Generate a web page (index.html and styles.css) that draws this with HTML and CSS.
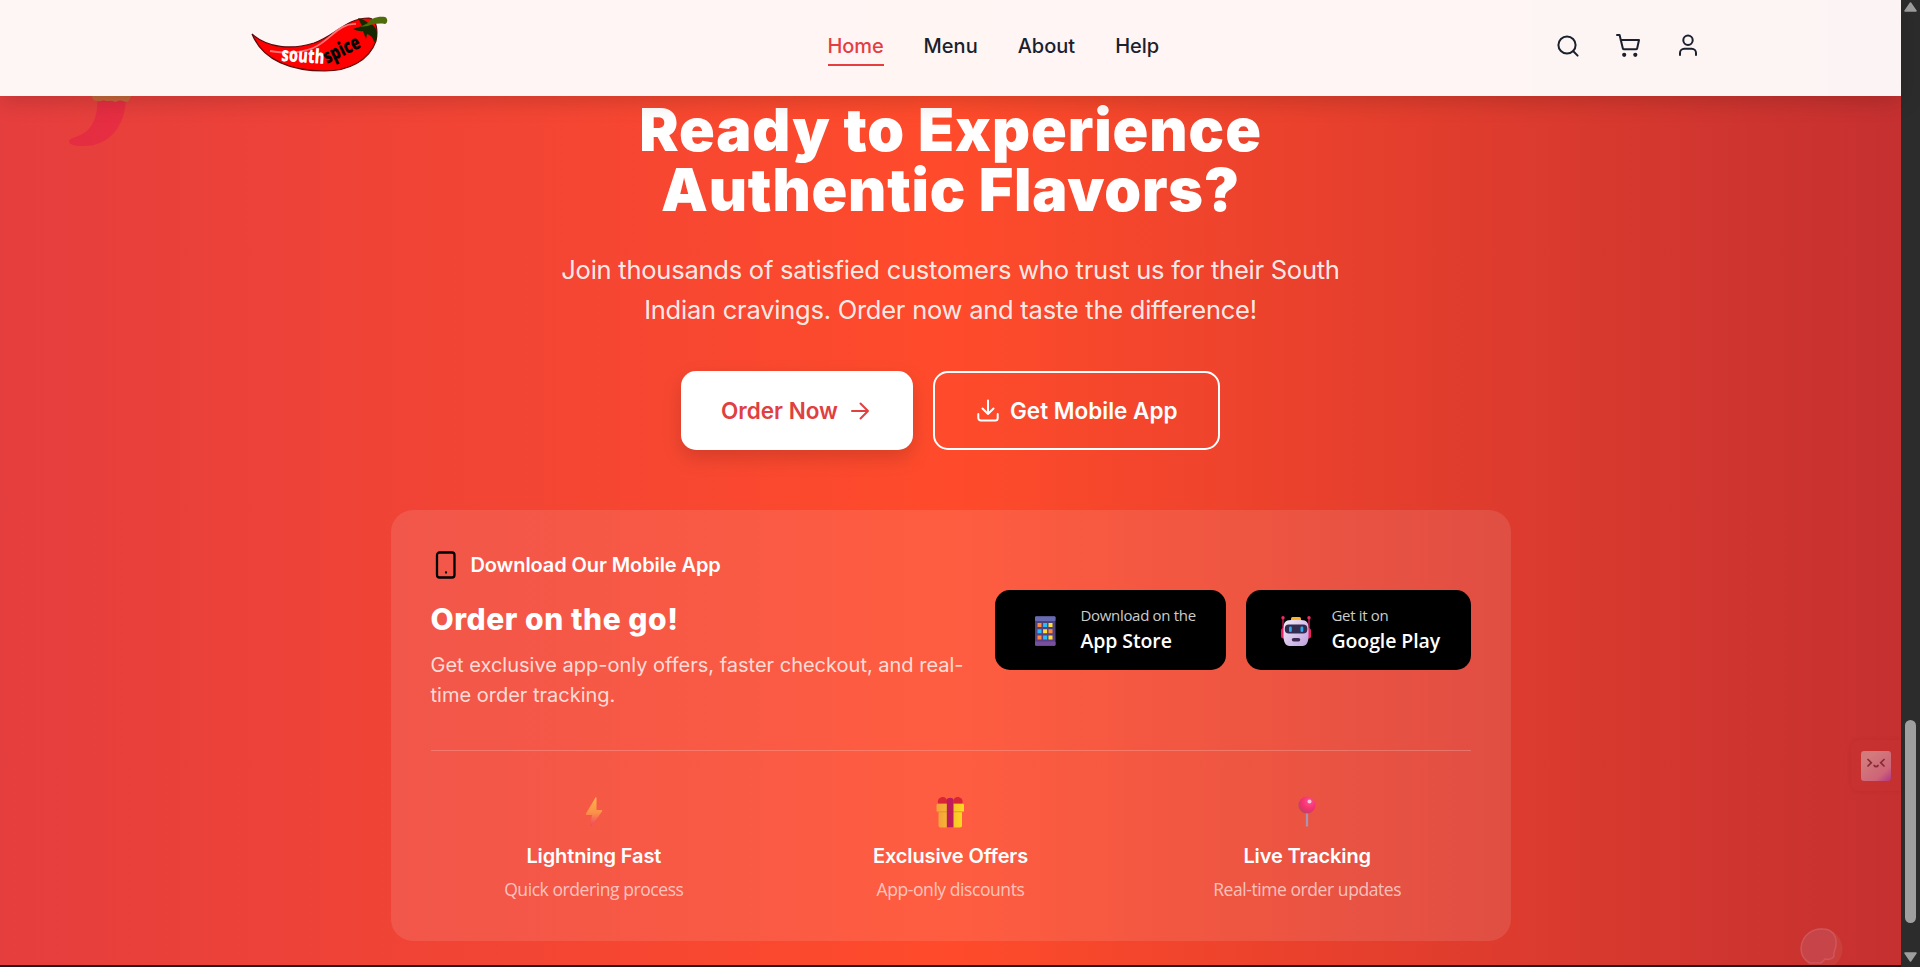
FILE: index.html
```html
<!DOCTYPE html>
<html lang="en">
<head>
<meta charset="utf-8">
<title>South Spice</title>
<link rel="stylesheet" href="styles.css">
</head>
<body>
<div class="page">
  <header class="header">
    <div class="header-inner">
      <a class="logo" aria-label="southspice">
        <svg width="140" height="62" viewBox="0 0 140 62">
          <path d="M1 20 C17 34 40 36 63 29 C84 22 95 4 118 4 C126 5 127 17 125 27 C118 47 97 57 74 57 C41 57 12 47 1 20Z" fill="#fe0000" stroke="#5c0a0a" stroke-width="1.2"/>
          <path d="M19 37 C33 39 47 40 62 34 C79 27 87 9 105 10" fill="none" stroke="#ff7474" stroke-width="1.8"/>
          <path d="M107 4 C112 5 115 7 117 9 C122 9 126 15 126 20 C126 24 125 27 123 28 C122 23 119 21 116 20 L115 25 L112 17 C110 18 104 16 102 15 L111 12Z" fill="#142900"/>
          <path d="M117 9 C119 5 126 2 134 3 C137 4 137 9 134 10 C128 9 121 10 117 12 L109 13Z" fill="#4e6c0b"/>
          <g class="logo-text">
            <text x="30" y="47" textLength="43" lengthAdjust="spacingAndGlyphs" transform="rotate(4 30 47)" fill="#fff">south</text>
            <text x="76" y="50" textLength="39" lengthAdjust="spacingAndGlyphs" transform="rotate(-26 76 50)" fill="#000">spice</text>
          </g>
        </svg>
      </a>
      <nav class="nav">
        <a class="nav-link active">Home</a>
        <a class="nav-link">Menu</a>
        <a class="nav-link">About</a>
        <a class="nav-link">Help</a>
      </nav>
      <div class="tools">
        <svg class="tool" viewBox="0 0 24 24"><circle cx="11" cy="11" r="8.6"/><path d="m17.3 17.3 4.3 4.3"/></svg>
        <svg class="tool" viewBox="0 0 24 24"><path d="M1 1h2.6l3.2 13.2a1.4 1.4 0 0 0 1.4 1.1h11.600a1.4 1.4 0 0 0 1.4-1.1L23 6H4.6"/><circle class="dot" cx="8.2" cy="20.8" r="2.1"/><circle class="dot" cx="19.3" cy="20.8" r="2.1"/></svg>
        <svg class="tool" viewBox="0 0 24 24"><path d="M20 21v-2a4.3 4.3 0 0 0-4.3-4.3H8.300A4.300 4.300 0 0 0 4 19v2"/><circle cx="12" cy="6.300" r="4.700"/></svg>
      </div>
    </div>
  </header>

  <main class="cta">
    <svg class="float-chili" width="66" height="54" viewBox="0 0 66 54">
      <path d="M28 0 H57 C57 32 38 51 14 50 C4 50 0 48 0 45 C0 43 4 42 9 40 C24 35 30 18 28 0Z" fill="#e4104e"/>
      <path d="M23 0 H62 C61 5 58 7 54 5 C50 4 49 5 46 6 C43 4 40 5 37 5 C34 3 32 6 29 5 C25 5 23 3 23 0Z" fill="#8fae38"/>
    </svg>
    <h1 class="title"><span class="t1">Ready to Experience</span><br><span class="t2">Authentic Flavors?</span></h1>
    <p class="lead">Join thousands of satisfied customers who trust us for their South<br>Indian cravings. Order now and taste the difference!</p>
    <div class="actions">
      <a class="btn btn-solid"><span>Order Now</span>
        <svg width="24" height="24" viewBox="0 0 24 24"><path d="M4 12h16M12.500 4.500 20 12l-7.500 7.500"/></svg></a>
      <a class="btn btn-line">
        <svg width="24" height="24" viewBox="0 0 24 24"><path d="M2.300 15v4a2.500 2.500 0 0 0 2.500 2.500h14.400a2.500 2.500 0 0 0 2.500-2.500v-4M12 1.500V15M6.500 9.500 12 15l5.500-5.500"/></svg>
        <span>Get Mobile App</span></a>
    </div>

    <section class="card">
      <div class="app-row">
        <div class="app-copy">
          <div class="label">
            <svg width="30" height="30" viewBox="0 0 30 30"><rect x="6" y="2.500" width="17.500" height="25" rx="2.500"/><path d="M15 22.500v.01"/></svg>
            <span>Download Our Mobile App</span>
          </div>
          <h2 class="subtitle">Order on the go!</h2>
          <p class="copy">Get exclusive app-only offers, faster checkout, and real-<br>time order tracking.</p>
        </div>
        <div class="stores">
          <a class="store store-apple">
            <svg width="30" height="30" viewBox="0 0 30 30">
              <defs><linearGradient id="ph" x2="0" y2="1"><stop stop-color="#45446f"/><stop offset="1" stop-color="#60408a"/></linearGradient></defs>
              <rect x="5" y="0" width="20.500" height="30" rx="1.500" fill="url(#ph)"/>
              <rect x="5" y="0.500" width="20.500" height="4.500" rx="1" fill="#686bb4"/>
              <rect x="5" y="25.500" width="20.500" height="4" rx="1" fill="#76509f"/>
              <g fill="#ff8a3c"><path d="M7.500 7h4v4h-4zM7.500 19.500h4v4h-4zM18.500 13.300h4v4h-4z"/></g>
              <g fill="#28bdf8"><path d="M13.100 7h4v4h-4zM7.500 13.300h4v4h-4zM13.100 19.500h4v4h-4z"/></g>
              <g fill="#ffdf3d"><path d="M18.500 7h4v4h-4zM13.100 13.300h4v4h-4zM18.500 19.500h4v4h-4z"/></g>
            </svg>
            <span class="store-text"><small>Download on the</small><b>App Store</b></span>
          </a>
          <a class="store store-google">
            <svg width="30" height="30" viewBox="0 0 30 30">
              <defs><linearGradient id="rb" x2="1" y2="1"><stop stop-color="#f4eaf6"/><stop offset="1" stop-color="#bda0df"/></linearGradient></defs>
              <path d="M2 2v13M28 2v13" stroke="#d81c5c" stroke-width="1.300"/>
              <circle cx="2" cy="1.800" r="1.700" fill="#f02b62"/><circle cx="28" cy="1.800" r="1.700" fill="#f02b62"/>
              <rect x="0" y="12" width="30" height="10.500" rx="2.500" fill="#ec215f"/>
              <rect x="10" y="1" width="10" height="5" rx="1.500" fill="#fcb624"/>
              <path d="M10 4h10c6 0 7.500 3 7.500 9v7c0 6-2 10-6 10h-13c-4 0-6-4-6-10v-7c0-6 1.500-9 7.500-9z" fill="url(#rb)"/>
              <rect x="3.800" y="8.500" width="22.500" height="9" rx="4" fill="#332b50"/>
              <rect x="8" y="10.500" width="2.800" height="5.500" rx="1.200" fill="#29a9f3"/><rect x="19.500" y="10.500" width="2.800" height="5.500" rx="1.200" fill="#29a9f3"/>
              <rect x="10.800" y="22" width="8.500" height="3.600" rx="1.800" fill="#3a2a52"/>
            </svg>
            <span class="store-text"><small>Get it on</small><b>Google Play</b></span>
          </a>
        </div>
      </div>
      <div class="features">
        <div class="feature">
          <svg width="32" height="32" viewBox="0 0 32 32">
            <defs><linearGradient id="bo" x2="0" y2="1"><stop stop-color="#fdb54c"/><stop offset=".55" stop-color="#fb8f49"/><stop offset="1" stop-color="#ef4168"/></linearGradient></defs>
            <path d="M17.500 1.500 8 17.500c-.4.800 0 1.500.8 1.500H14l-1.500 11c.3.400.8.300 1.200-.200L24 15.500c.5-.8.200-1.500-.6-1.500H18.500V2c0-.8-.6-1-1-.5z" fill="url(#bo)"/></svg>
          <h3>Lightning Fast</h3><p>Quick ordering process</p>
        </div>
        <div class="feature">
          <svg width="32" height="32" viewBox="0 0 32 32">
            <defs><linearGradient id="gi" x2="1" y2="0"><stop stop-color="#f3a13c"/><stop offset="1" stop-color="#fcd820"/></linearGradient></defs>
            <rect x="4.500" y="12" width="23.500" height="19.500" rx="2" fill="url(#gi)"/>
            <rect x="2.500" y="7.500" width="27.500" height="8.500" rx="1.500" fill="url(#gi)"/>
            <path d="M3 15.800h26.500" stroke="#e28a2e" stroke-width=".8"/>
            <path d="M4 7.600C3 3 6 1 9 1c2 0 3.500 1.500 4 3v3.600zM28.500 7.600C29.500 3 26.500 1 23.500 1c-2 0-3.500 1.500-4 3v3.600z" fill="#d92636"/>
            <path d="M12.800 4c0-3 6.700-3 6.700 0v27.500h-6.700z" fill="#bd1d5b"/></svg>
          <h3>Exclusive Offers</h3><p>App-only discounts</p>
        </div>
        <div class="feature">
          <svg width="32" height="32" viewBox="0 0 32 32">
            <defs><radialGradient id="pi" cx=".65" cy=".3" r=".75"><stop stop-color="#ff4f8d"/><stop offset=".6" stop-color="#f52f70"/><stop offset="1" stop-color="#b84461"/></radialGradient></defs>
            <path d="M16 16v14.500" stroke="#a994b2" stroke-width="2.300"/><circle cx="16" cy="9" r="8.600" fill="url(#pi)"/><circle cx="18.500" cy="5.500" r="2" fill="#ffc0d8"/></svg>
          <h3>Live Tracking</h3><p>Real-time order updates</p>
        </div>
      </div>
    </section>

    <svg class="float-onion" width="44" height="37" viewBox="0 0 44 37">
      <circle cx="22" cy="21" r="20.500" fill="#ca3f3b"/>
      <path d="M1 20C2 7 13 0 23 1c9 0 14 7 13 15 0 6-3 8-2 11 0 4-6 5-9 4l-4 4H10C4 32 1 27 1 20z" fill="#c74549" stroke="#d1565a" stroke-width="1.500"/>
    </svg>
    <div class="widget">
      <svg width="30" height="30" viewBox="0 0 30 30">
        <defs><linearGradient id="wd" x1=".3" y1=".2" x2="1" y2="1"><stop stop-color="#d27a7c"/><stop offset=".65" stop-color="#ce6478"/><stop offset="1" stop-color="#b03584"/></linearGradient></defs>
        <rect width="30" height="30" rx="3" fill="url(#wd)"/>
        <path d="m7 8.500 3.300 3.200L7 15M23 8.500l-3.300 3.200L23 15M13.200 14.500c.8 1.500 3 1.500 3.800 0" fill="none" stroke="#862a35" stroke-width="1.700" stroke-linecap="round"/>
      </svg>
    </div>
  </main>
  <div class="footer-edge"></div>
</div>
<div class="scrollbar">
  <svg width="13" height="10" viewBox="0 0 13 10"><path d="M6.500 1 12 9H1z" fill="#9f9f9f" stroke="#9f9f9f" stroke-width="1.500" stroke-linejoin="round"/></svg>
  <div class="thumb"></div>
  <svg width="13" height="10" viewBox="0 0 13 10"><path d="M6.500 9 12 1H1z" fill="#9f9f9f" stroke="#9f9f9f" stroke-width="1.500" stroke-linejoin="round"/></svg>
</div>
</body>
</html>
```
FILE: styles.css
```css
* { box-sizing: border-box; margin: 0; padding: 0; }
body {
  display: flex;
  height: 967px;
  overflow: hidden;
  font-family: Inter, "Liberation Sans", sans-serif;
  color: #fff;
}
.page { display: flex; flex-direction: column; width: 1901px; background: linear-gradient(90deg, #e53e3e 0%, #ff4b2b 50%, #c53030 100%); }

/* Header */
.header {
  position: relative;
  z-index: 2;
  height: 96px;
  background: rgba(255, 255, 255, .95);
  box-shadow: 0 4px 22px rgba(0, 0, 0, .18);
}
.header-inner { display: flex; align-items: flex-start; width: 1460px; height: 96px; margin: 0 auto; padding-left: 30px; }
.logo { width: 577px; padding-top: 14px; }
.logo svg { display: block; overflow: visible; }
.logo-text { font: 800 20px "Open Sans", sans-serif; }
.nav { display: flex; gap: 40px; flex: 1; padding-top: 26px; }
.nav-link { height: 40px; font-size: 20px; font-weight: 500; line-height: 40px; color: #1a202c; }
.nav-link.active { color: #e53e3e; border-bottom: 2px solid #e53e3e; letter-spacing: -.1px; }
.tools { display: flex; gap: 36px; padding-top: 34px; margin-right: -19px; }
.tool { width: 24px; height: 24px; fill: none; stroke: #1a202c; stroke-width: 2; stroke-linecap: round; stroke-linejoin: round; overflow: visible; }
.tool .dot { fill: #1a202c; stroke: none; }

/* Call to action */
.cta { position: relative; display: flex; flex-direction: column; align-items: center; height: 869px; padding-top: 4px; text-align: center; }
.title { font-size: 59px; font-weight: 900; line-height: 60px; white-space: nowrap; }
.t1 { letter-spacing: .95px; }
.t2 { letter-spacing: .8px; }
.lead { margin-top: 30px; font-size: 25.500px; line-height: 40px; letter-spacing: -.24px; color: rgba(255, 255, 255, .9); }
.actions { display: flex; gap: 20px; margin-top: 41px; }
.btn { display: flex; align-items: center; height: 79px; border-radius: 15px; font-size: 22.500px; font-weight: 600; white-space: nowrap; }
.btn svg { fill: none; stroke: currentColor; stroke-width: 2; stroke-linecap: round; stroke-linejoin: round; }
.btn-solid { width: 232px; padding-left: 40px; gap: 10px; background: #fff; color: #e04040; box-shadow: 0 8px 20px rgba(0, 0, 0, .15); }
.btn-line { width: 287px; padding-left: 41px; gap: 10px; border: 2px solid #fff; }

.card { width: 1120px; height: 431px; margin-top: 60px; padding: 40px; border-radius: 22px; background: rgba(255, 255, 255, .1); }
.app-row { display: flex; align-items: center; justify-content: space-between; height: 201px; padding-bottom: 40px; border-bottom: 1px solid rgba(255, 255, 255, .2); }
.app-copy { text-align: left; }
.label { display: flex; align-items: center; gap: 10px; height: 30px; font-size: 20px; font-weight: 600; letter-spacing: -.1px; }
.label svg { fill: none; stroke: #000; stroke-width: 2.300; stroke-linecap: round; }
.subtitle { margin-top: 21px; font-size: 30px; font-weight: 800; line-height: 36px; letter-spacing: .55px; }
.copy { margin-top: 13px; font-size: 20px; line-height: 30px; color: rgba(255, 255, 255, .8); white-space: nowrap; }
.stores { display: flex; gap: 20px; }
.store { display: flex; align-items: center; height: 80px; border-radius: 15px; background: #000; font-family: "Open Sans", "Noto Sans", sans-serif; }
.store svg { margin-top: 2px; }
.store-apple { width: 231px; padding-left: 35px; gap: 21px; }
.store-google { width: 225px; padding-left: 35px; gap: 21px; }
.store-text { display: flex; flex-direction: column; text-align: left; white-space: nowrap; }
.store-text small { font-size: 15px; line-height: 22px; letter-spacing: -.32px; color: #ccc; }
.store-text b { font-size: 19.500px; font-weight: 600; line-height: 30px; letter-spacing: -.1px; }

.features { display: grid; grid-template-columns: repeat(3, 1fr); gap: 30px; padding-top: 45px; }
.feature svg { display: block; margin: 0 auto; }
.feature h3 { margin-top: 13px; font-size: 20px; font-weight: 600; line-height: 30px; letter-spacing: -.12px; }
.feature p { margin-top: 3px; font: 17.500px/30px "Open Sans", "Noto Sans", sans-serif; letter-spacing: -.43px; color: rgba(255, 255, 255, .65); }

/* Decorations over the gradient */
.float-chili { position: absolute; left: 69px; top: 0; opacity: .36; }
.float-onion { position: absolute; left: 1800px; bottom: 0; }
.widget { position: absolute; right: 0; top: 644px; width: 50px; height: 51px; padding: 11px 10px; border-radius: 8px 0 0 8px; box-shadow: 0 0 4px rgba(90, 0, 0, .08); }
.widget svg { display: block; }
.footer-edge { height: 2px; background: #24161c; }

/* Scrollbar */
.scrollbar { display: flex; flex-direction: column; align-items: center; width: 19px; padding: 2px 0 5px; background: #2c2c2c; }
.thumb { width: 11px; height: 203px; margin: 708px 0 auto; border-radius: 6px; background: #9f9f9f; }
```
